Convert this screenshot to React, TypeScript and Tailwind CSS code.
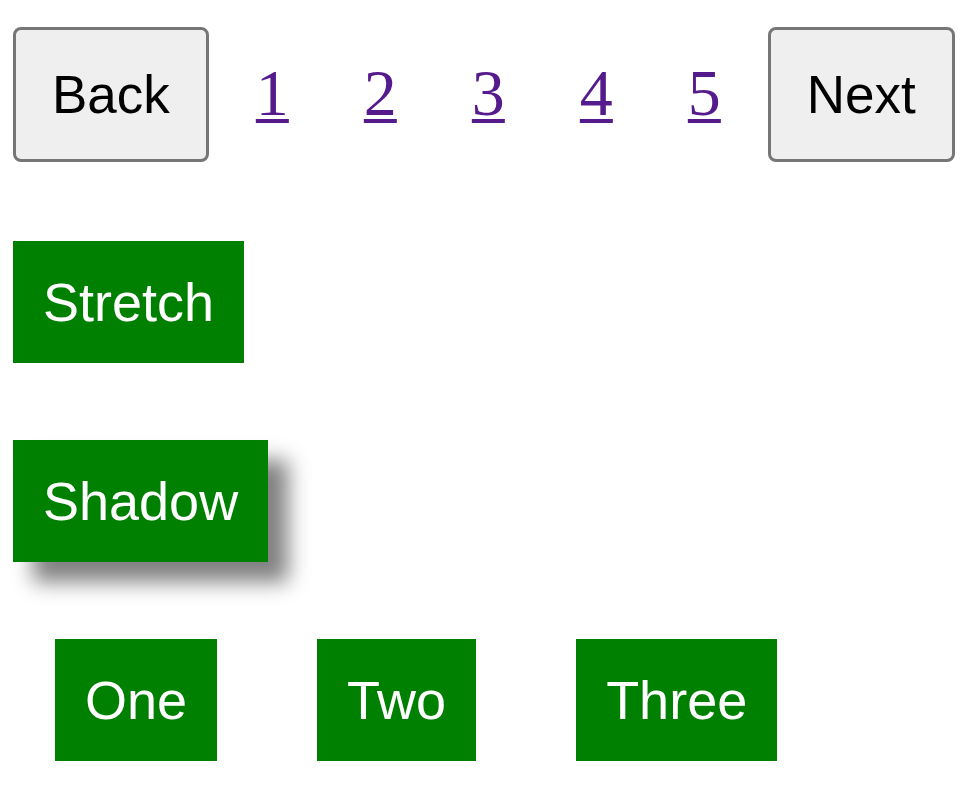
import { ReactNode } from 'react'

// ── PagerButton ───────────────────────────────────────────────────────────────
function PagerButton({ children, className = '' }: { children: ReactNode; className?: string }) {
  return (
    <button
      type="button"
      className={`bg-[#efefef] border-[3px] border-[#767676] rounded-[8px] px-[36px] py-[35px] text-[53px] leading-[59px] text-black ${className}`}
    >
      {children}
    </button>
  )
}

// ── GreenBox ──────────────────────────────────────────────────────────────────
function GreenBox({ children, className = '' }: { children: ReactNode; className?: string }) {
  return (
    <div className={`bg-[#008000] text-white text-[54px] leading-[60px] px-[30px] py-[31px] ${className}`}>
      {children}
    </div>
  )
}

export default function App() {
  const pages = [1, 2, 3, 4, 5]
  return (
    <div className="min-h-screen bg-white font-['Liberation_Sans',Arial,sans-serif] pl-[13px] pt-[27px]">
      {/* pager */}
      <div className="flex items-center">
        <PagerButton>Back</PagerButton>
        {pages.map((p, i) => (
          <a
            key={p}
            href="#"
            className={`font-['Liberation_Serif','Times_New_Roman',serif] text-[66px] leading-none -mt-[4px] text-[#551a8b] underline decoration-[4px] underline-offset-[4px] ${
              i === 0 ? 'ml-[47px]' : 'ml-[75px]'
            }`}
          >
            {p}
          </a>
        ))}
        <PagerButton className="ml-[47px]">Next</PagerButton>
      </div>

      {/* stretch */}
      <div className="mt-[79px] flex">
        <GreenBox>Stretch</GreenBox>
      </div>

      {/* shadow */}
      <div className="mt-[77px] flex">
        <GreenBox className="shadow-[20px_20px_20px_#808080]">Shadow</GreenBox>
      </div>

      {/* row */}
      <div className="mt-[77px] ml-[42px] flex gap-[100px]">
        <GreenBox>One</GreenBox>
        <GreenBox>Two</GreenBox>
        <GreenBox>Three</GreenBox>
      </div>
    </div>
  )
}
